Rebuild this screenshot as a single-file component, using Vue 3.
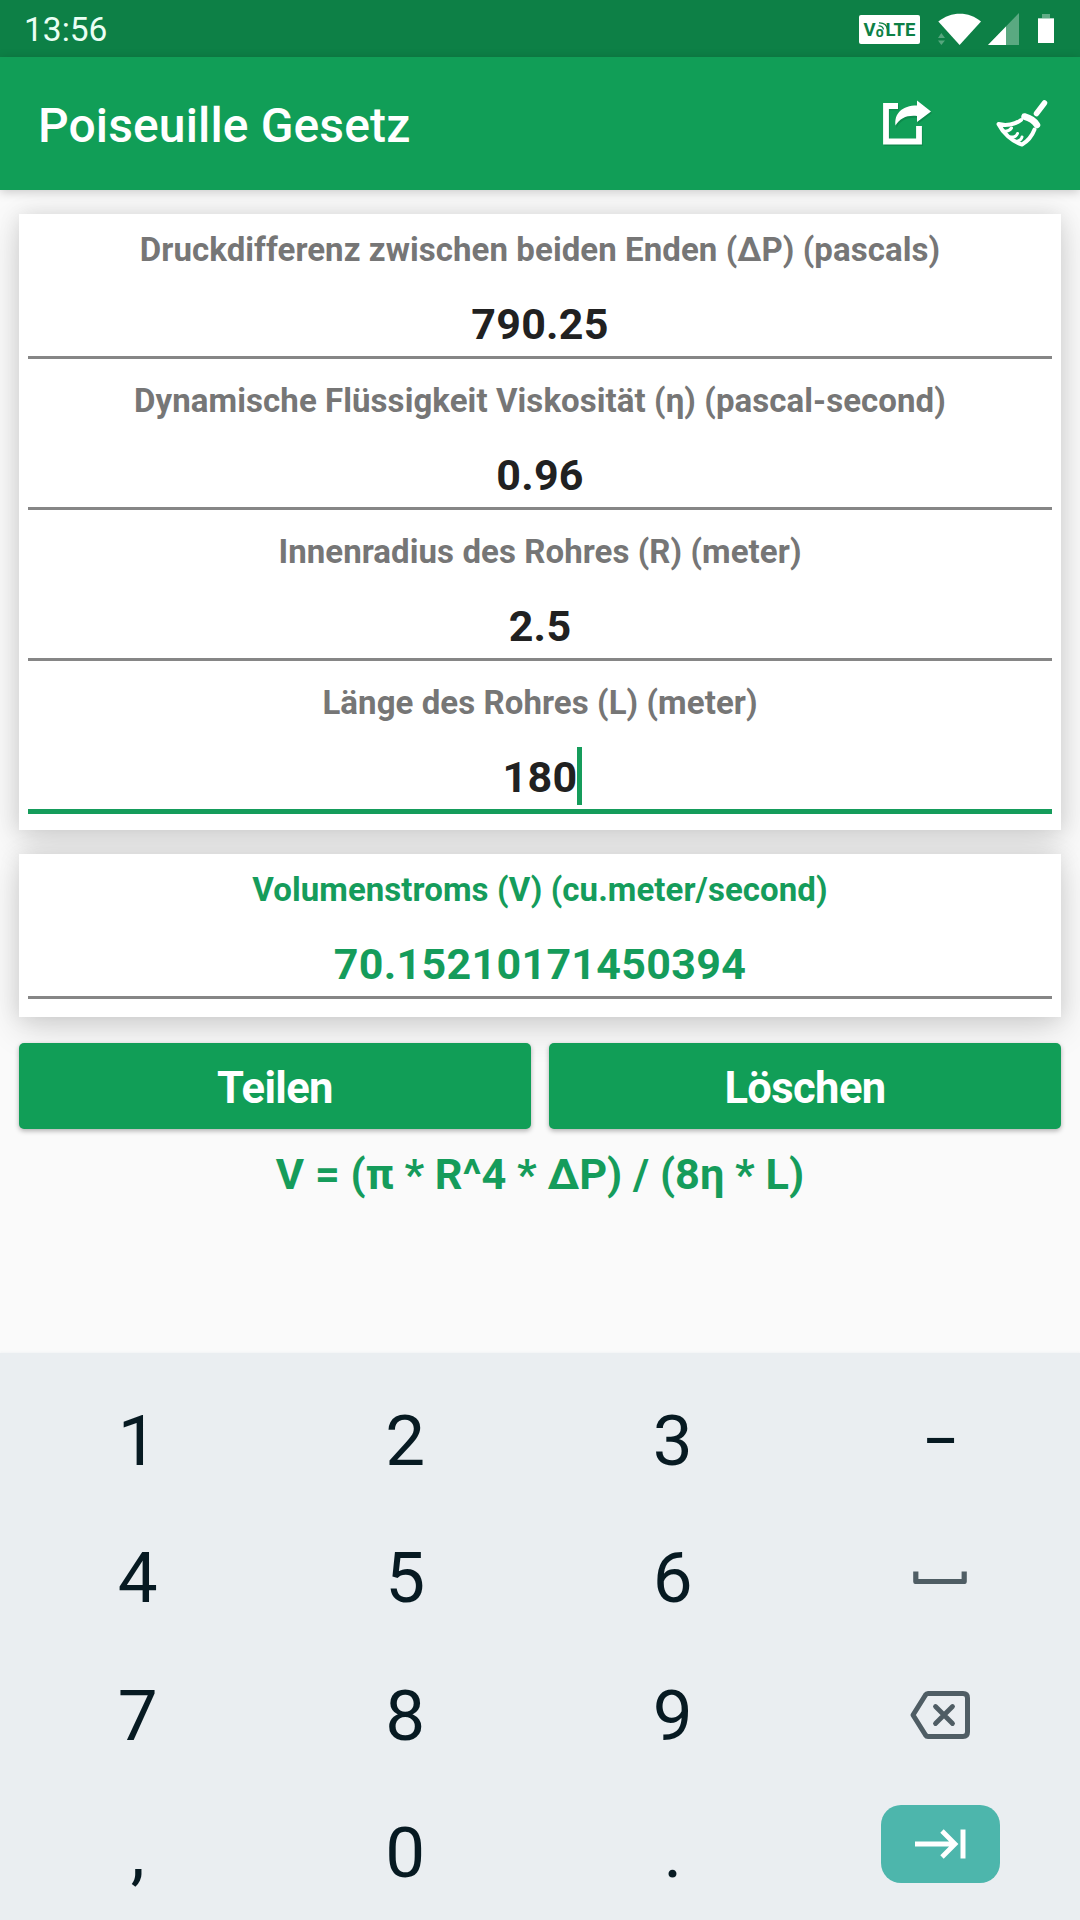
<template>
  <div class="screen">
    <header class="status-bar">
      <span class="clock">13:56</span>
      <div class="status-icons">
        <span class="volte">V<span class="volte-o">o<svg class="volte-waves" viewBox="0 0 11 8">
          <path d="M0.500 3.800Q4.500 3.500 5.500 7.500M1 0.800Q8.500 0.500 9.500 7.500" fill="none" stroke="#0d8046" stroke-width="1.3" />
        </svg></span>LTE</span>
        <svg class="wifi" width="44" height="32" viewBox="0 0 44 32">
          <path d="M0.3 8.5C13-2 31-2 43 8.5L21.6 32Z" fill="#fff" />
          <path d="M0 25L3.3 20L7 25ZM0 27.5L3.3 32L7 27.5Z" fill="#fff" opacity="0.3" />
        </svg>
        <svg class="signal" width="31" height="32" viewBox="0 0 31 32">
          <path d="M31 0V32H0Z" fill="#fff" opacity="0.32" />
          <path d="M18 13.4V32H0Z" fill="#fff" />
        </svg>
        <svg class="battery" width="16" height="29" viewBox="0 0 16 29">
          <path d="M4 0H12V4H16V7H0V4H4Z" fill="#fff" opacity="0.35" />
          <path d="M0 4.5H16V29H0Z" fill="#fff" />
        </svg>
      </div>
    </header>

    <div class="app-bar">
      <h1 class="title">Poiseuille Gesetz</h1>
      <button class="icon-btn share">
        <svg width="52" height="46" viewBox="0 0 52 46">
          <path d="M16 6H4V42H37V26" fill="none" stroke="#0b7541" stroke-width="5.5" transform="translate(1 1.5)" opacity="0.5" />
          <path d="M36 1L50 12L36 23V17C26 16 18 19 14.5 27C13 15 21 6.5 36 6.5Z" fill="#0b7541" transform="translate(0 1)" opacity="0.5" />
          <path d="M16 6H4V41.500H37V26" fill="none" stroke="#fff" stroke-width="5.8" />
          <path d="M35 0.500L49 11.500L35 22V16C25 15 18 18 13.500 25.500C12 13.500 20 5.500 35 5.500Z" fill="#fff" />
        </svg>
      </button>
      <button class="icon-btn">
        <svg width="52" height="48" viewBox="0 0 52 48">
          <path d="M48.500 3L40.500 13.500" stroke="#fff" stroke-width="5.5" stroke-linecap="round" />
          <path d="M28.500 16.500C34 18 38.500 21 41 25" fill="none" stroke="#fff" stroke-width="6.500" stroke-linecap="round" />
          <path d="M25 20C19 24.500 10 26 2.500 24C7 33 16 41.500 26 44.500C32 41 36 36 38.500 29.500" fill="none" stroke="#fff" stroke-width="4" stroke-linejoin="round" stroke-linecap="round" />
          <path d="M8 31C11 31.500 14 30 15.500 28M14 37C18 37.500 20.500 36 21.500 33.500M20 41.500C23 41 25.500 39.500 26 37" fill="none" stroke="#fff" stroke-width="3" stroke-linecap="round" />
        </svg>
      </button>
    </div>

    <main class="content">
      <section class="card">
        <div v-for="field in fields" :key="field.label" class="field" :class="{ focused: field.focused }">
          <label class="label">{{ field.label }}</label>
          <div class="value"><span class="input">{{ field.value }}<i v-if="field.focused" class="caret"></i></span></div>
        </div>
      </section>

      <section class="card">
        <div class="field result">
          <label class="label">Volumenstroms (V) (cu.meter/second)</label>
          <div class="value">70.15210171450394</div>
        </div>
      </section>

      <div class="actions">
        <button class="action-btn">Teilen</button>
        <button class="action-btn">Löschen</button>
      </div>
      <p class="formula">V = (π * R^4 * ΔP) / (8η * L)</p>
    </main>

    <div class="keyboard">
      <button v-for="key in keys" :key="key" class="key" :class="{ dash: key === '–', last: key === 'next', icon: key.length > 1 }">
        <svg v-if="key === 'space'" width="54" height="14" viewBox="0 0 54 14">
          <path d="M2.800 1.500V11.500H51.200V1.500" fill="none" stroke="#4f5d64" stroke-width="5.2" stroke-linejoin="round" />
        </svg>
        <svg v-else-if="key === 'backspace'" width="60" height="48" viewBox="0 0 60 48">
          <path d="M18 2.500H53Q57.500 2.500 57.500 7V41Q57.500 45.500 53 45.500H18Q16.500 45.500 15.500 44L3 24L15.500 4Q16.500 2.500 18 2.500Z" fill="none" stroke="#4f5d64" stroke-width="5" stroke-linejoin="round" />
          <path d="M25.500 15.500L42.500 32.500M42.500 15.500L25.500 32.500" stroke="#4f5d64" stroke-width="4.8" stroke-linecap="round" />
        </svg>
        <span v-else-if="key === 'next'" class="next">
          <svg width="52" height="30" viewBox="0 0 52 30">
            <path d="M1 15H41M28 2L41 15L28 28" fill="none" stroke="#fff" stroke-width="4.8" />
            <path d="M49 0.500V29.500" stroke="#fff" stroke-width="5" />
          </svg>
        </span>
        <template v-else>{{ key }}</template>
      </button>
    </div>
  </div>
</template>

<script setup>
const fields = [
  { label: 'Druckdifferenz zwischen beiden Enden (ΔP) (pascals)', value: '790.25' },
  { label: 'Dynamische Flüssigkeit Viskosität (η) (pascal-second)', value: '0.96' },
  { label: 'Innenradius des Rohres (R) (meter)', value: '2.5' },
  { label: 'Länge des Rohres (L) (meter)', value: '180', focused: true }
]

const keys = [
  '1', '2', '3', '–',
  '4', '5', '6', 'space',
  '7', '8', '9', 'backspace',
  ',', '0', '.', 'next'
]
</script>

<style>
body {
  margin: 0;
}
</style>

<style scoped>
.screen {
  display: flex;
  flex-direction: column;
  width: 1080px;
  height: 1920px;
  overflow: hidden;
  background-color: #fafafa;
  font-family: Roboto, "Noto Sans", sans-serif;
}

button {
  padding: 0;
  border: none;
  background: none;
  font-family: inherit;
  cursor: pointer;
}

svg {
  display: block;
}

.status-bar {
  display: flex;
  align-items: center;
  justify-content: space-between;
  box-sizing: border-box;
  height: 57px;
  padding: 0 26px 0 24px;
  background-color: #0d8046;
}

.clock {
  padding-top: 2px;
  color: #eafff4;
  font-size: 33.5px;
  line-height: 59px;
}

.status-icons {
  display: flex;
  align-items: center;
}

.volte {
  display: flex;
  justify-content: center;
  width: 61px;
  height: 29px;
  margin: 2px 18px 0 0;
  border-radius: 2px;
  background-color: #fff;
  color: #0d8046;
  font-size: 18.5px;
  font-weight: 700;
  line-height: 31px;
}

.volte-o {
  position: relative;
  margin-right: 2px;
  font-size: 14px;
  line-height: 34px;
}

.volte-waves {
  position: absolute;
  top: 7px;
  left: 2px;
  width: 11px;
  height: 8px;
}

.signal {
  margin: 0 19px 0 6px;
}

.app-bar {
  display: flex;
  align-items: center;
  box-sizing: border-box;
  height: 133px;
  padding: 0 32px 0 38px;
  background-color: #119e57;
  box-shadow: 0 2px 10px rgba(0, 0, 0, 0.2);
}

.title {
  flex: 1;
  margin: 3px 0 0;
  color: #fff;
  font-size: 48px;
  font-weight: 500;
  letter-spacing: 0.13px;
}

.icon-btn {
  margin-left: 62px;
}

.share {
  margin-bottom: 2px;
}

.content {
  display: flex;
  flex: 1;
  flex-direction: column;
  gap: 24px;
  padding: 24px 19px 0;
  isolation: isolate;
}

.card {
  position: relative;
  padding-bottom: 12px;
  background-color: #fff;
}

/* kept behind the cards so neighbours are not shaded */
.card::before {
  content: "";
  position: absolute;
  inset: 0;
  z-index: -1;
  box-shadow: 0 12px 34px rgba(0, 0, 0, 0.14), 0 0 20px rgba(0, 0, 0, 0.1);
}

.field {
  box-sizing: border-box;
  height: 151px;
  padding: 16px 9px 0;
  text-align: center;
}

.label {
  display: block;
  color: #767676;
  font-size: 33px;
  font-weight: 700;
  letter-spacing: 0.07px;
  line-height: 40px;
}

.value {
  margin-top: 28px;
  padding-bottom: 6px;
  border-bottom: 3px solid #868686;
  color: #212121;
  font-size: 43px;
  font-weight: 700;
  letter-spacing: 0.3px;
  line-height: 52px;
}

.input {
  position: relative;
}

.focused .value {
  border-bottom: 5px solid #159c5b;
}

.caret {
  position: absolute;
  top: -5px;
  right: -5px;
  width: 5px;
  height: 58px;
  background-color: #159c5b;
}

.result .label,
.result .value {
  color: #159c5b;
}

.actions {
  display: flex;
  gap: 18px;
  margin-top: 2px;
}

.action-btn {
  flex: 1;
  height: 86px;
  padding-top: 5px;
  border-radius: 5px;
  background-color: #119e57;
  box-shadow: 0 2px 5px rgba(0, 0, 0, 0.3);
  color: #fff;
  font-size: 43.5px;
  font-weight: 700;
  letter-spacing: -0.6px;
}

.formula {
  margin: -4px 0 0;
  color: #159c5b;
  font-size: 43.3px;
  font-weight: 700;
  line-height: 52px;
  text-align: center;
}

.keyboard {
  display: grid;
  grid-template-columns: repeat(4, 267.5px);
  grid-auto-rows: 137.5px;
  justify-content: center;
  box-sizing: border-box;
  height: 567px;
  padding: 18px 2px 0 0;
  background-color: #eaeef1;
  box-shadow: 0 0 3px #eaeef1;
}

.key {
  display: flex;
  align-items: center;
  justify-content: center;
  padding-top: 1px;
  color: #071a22;
  font-size: 71px;
  line-height: 83px;
}

.icon {
  padding: 0;
}

.dash {
  padding-top: 2px;
  font-size: 54px;
  font-weight: 500;
}

.last {
  padding-bottom: 16px;
}

.next {
  display: flex;
  align-items: center;
  justify-content: center;
  width: 119px;
  height: 78px;
  border-radius: 20px;
  background-color: #4db6ac;
}
</style>
